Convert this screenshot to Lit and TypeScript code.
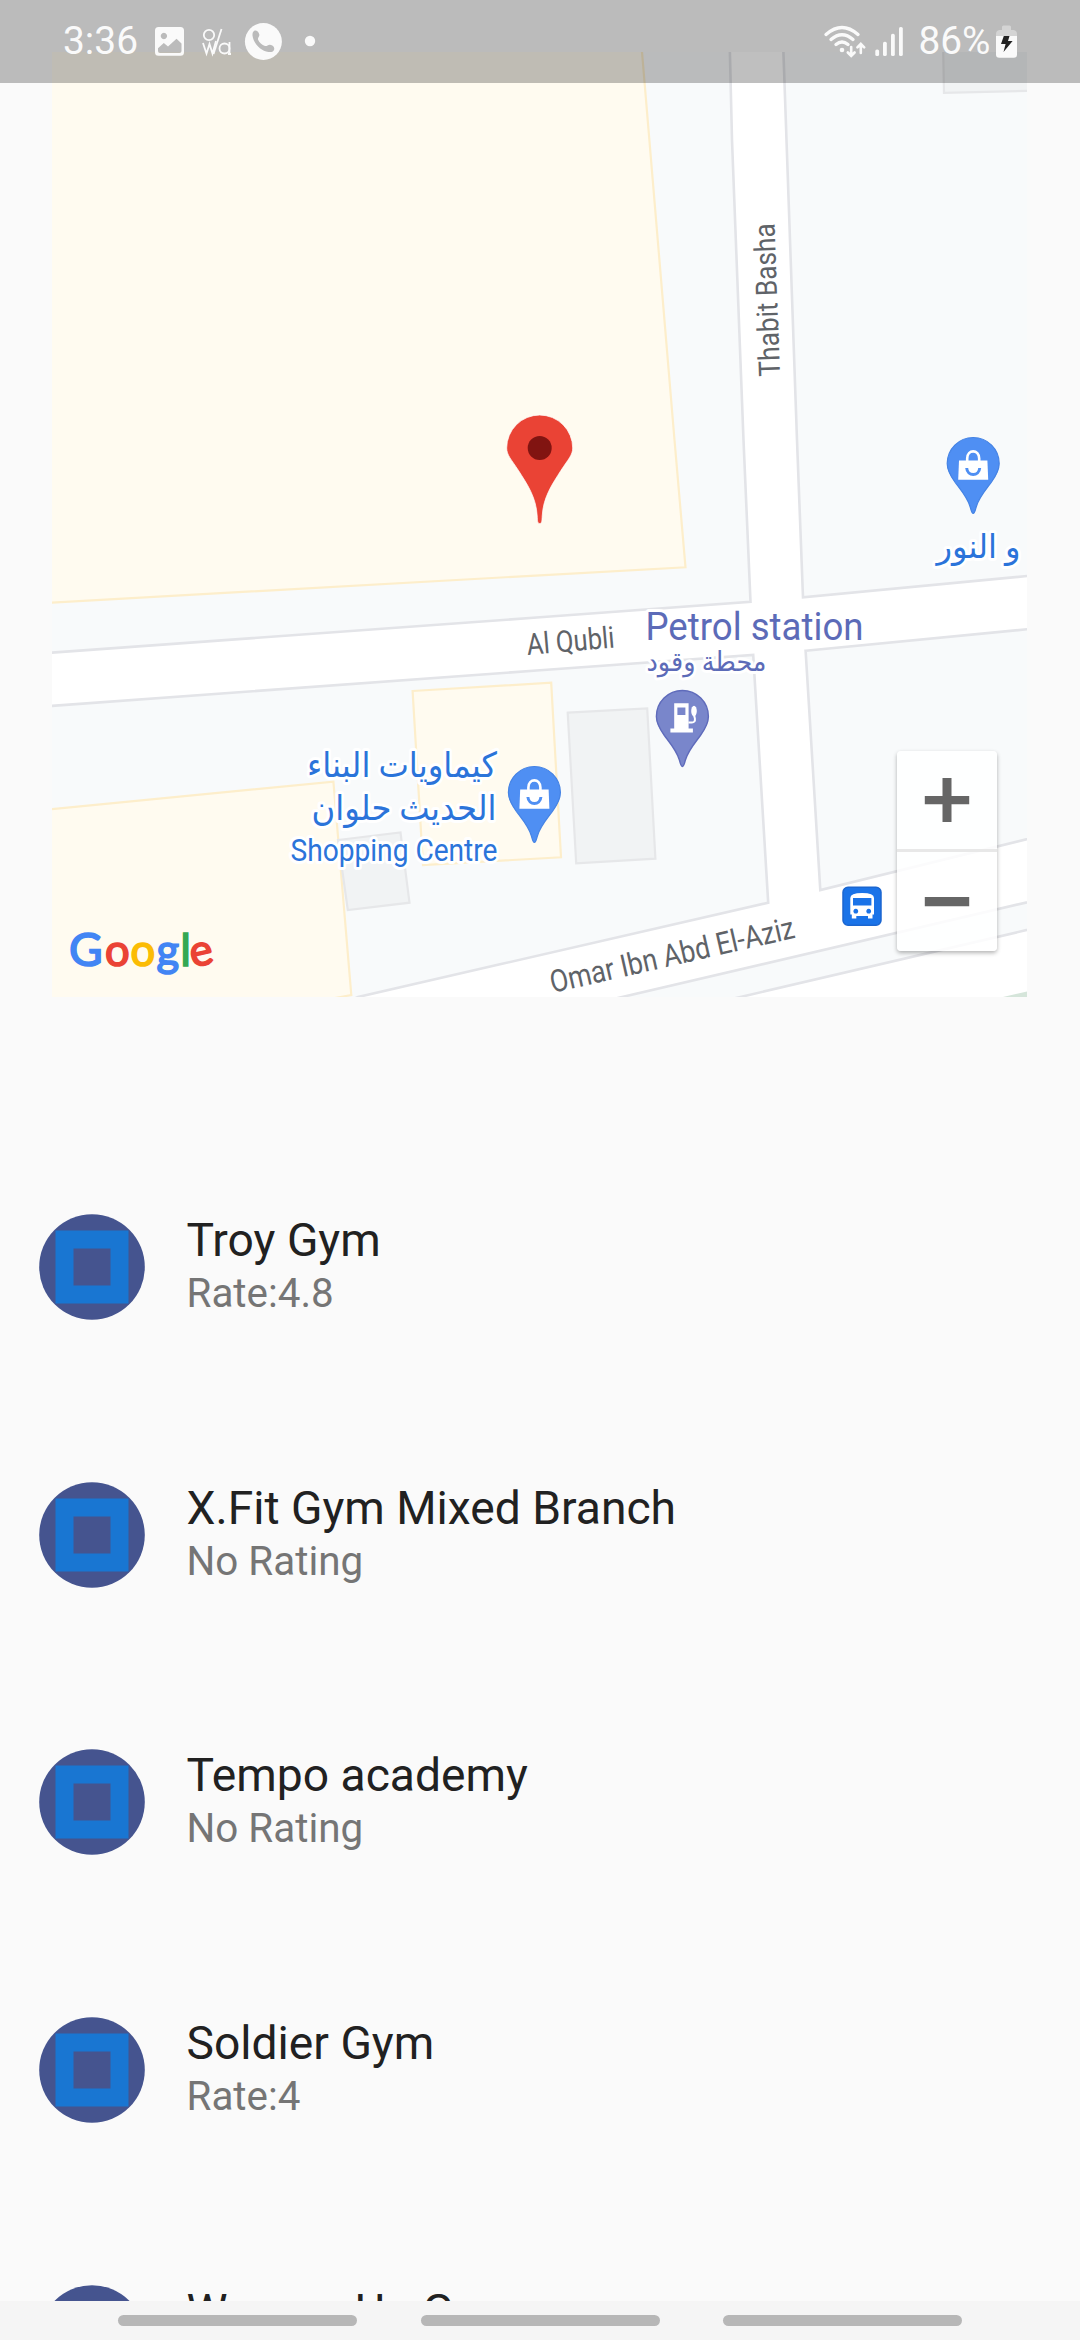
import { LitElement, html, svg, css } from "lit";
import { customElement, property } from "lit/decorators.js";

interface Gym {
  name: string;
  rating: string;
}

const GYMS: Gym[] = [
  { name: "Troy Gym", rating: "Rate:4.8" },
  { name: "X.Fit Gym Mixed Branch", rating: "No Rating" },
  { name: "Tempo academy", rating: "No Rating" },
  { name: "Soldier Gym", rating: "Rate:4" },
  { name: "Women Up Gym", rating: "No Rating" },
];

const PIN = "M0 50 C-1.6 50 -2 47 -3 43.5 C-5.500 34.500 -12 27 -18 19 C-23 12 -26 7 -26 0 A26 26 0 0 1 26 0 C26 7 23 12 18 19 C12 27 5.500 34.500 3 43.500 C2 47 1.600 50 0 50 Z";

const shopPin = (x: number, y: number) => svg`
  <g transform="translate(${x} ${y})">
    <path class="pin-shop" d=${PIN} />
    <path fill="#fff" d="M-14.200 -3 H14.200 L15 16.300 H-15 Z" />
    <path fill="none" stroke="#fff" stroke-width="2.600" d="M-6 -2 V-5 C-6 -14.500 6 -14.500 6 -5 V-2" />
    <path fill="none" stroke="#4f8ff3" stroke-width="3" d="M-6.500 4.500 C-6 13 6 13 6.500 4.500" />
  </g>`;

@customElement("status-bar")
class StatusBar extends LitElement {
  static styles = css`
    :host { display: block; height: 83px; background: rgba(0, 0, 0, 0.25); }
    .bar { display: flex; justify-content: space-between; width: 1080px; height: 83px; }
    svg { display: block; }
    text { font-family: Roboto, sans-serif; fill: #fafafa; }
  `;
  render() {
    return html`<div class="bar">
      <svg width="340" height="83" viewBox="0 0 340 83" fill="#fafafa">
        <text x="63" y="54.300" font-size="39.500" textLength="75" lengthAdjust="spacingAndGlyphs">3:36</text>
        <path fill-rule="evenodd" d="M158.500 27 H180.500 Q184 27 184 30.500 V52.300 Q184 55.800 180.500 55.800 H158.500 Q155 55.800 155 52.300 V30.500 Q155 27 158.500 27 Z M158 48.200 L163.800 43 L168 46.500 L176.500 38.800 L181.500 43.500 V51 Q181.500 53 179.500 53 H160 Q158 53 158 51 Z M163.900 32.800 a3.200 3.200 0 1 0 .01 0 Z" />
        <g fill="none" stroke="#fafafa" stroke-width="1.800">
          <circle cx="209" cy="35" r="5.200" />
          <path d="M221.500 29 L213.500 54" />
          <path d="M203 43 L206.500 53.500 L209.500 44 L212.500 53.500 L216 41" />
          <circle cx="224.500" cy="48.500" r="5" />
          <path d="M229.500 42 V54 M228 54 H231" />
        </g>
        <circle cx="263.400" cy="41.500" r="18.500" />
        <path fill="#bbb" d="M254 31 C256 29.800 258.500 31.500 259.300 34.500 C259.800 36.500 257.500 37.800 258 39.500 C259.200 42.500 262 45 265 46 C266.800 46.500 268 44.500 270 44.700 C273 45.200 275 47 274 50 C273 52 271 52.300 268.500 52 C260.500 50.500 253.500 43.500 252.500 35.500 C252.400 33.500 252.700 32 254 31 Z" />
        <circle cx="310" cy="41" r="5.200" />
      </svg>
      <svg width="270" height="83" viewBox="810 0 270 83" fill="#fafafa">
        <g fill="none" stroke="#fafafa" stroke-width="3.400" stroke-linecap="round">
          <path d="M826 34.500 Q842 20.500 858 34.500" />
          <path d="M831 39.500 Q842 30 853 39.500" />
          <path d="M836 44.500 Q842 39.500 848 44.500" />
          <path stroke-width="2.600" d="M851.200 47 V55.500 M847.800 52.500 L851.200 56 L854.600 52.500 M860.800 53 V44.500 M857.400 47.300 L860.800 43.800 L864.200 47.300" />
        </g>
        <circle cx="842" cy="50" r="2.300" />
        <rect x="875.300" y="49.500" width="3.800" height="6.500" rx="1.600" />
        <rect x="883" y="41.700" width="3.800" height="14.300" rx="1.600" />
        <rect x="891" y="33.800" width="3.800" height="22.200" rx="1.600" />
        <rect x="899" y="27" width="3.800" height="29" rx="1.600" />
        <text x="918.500" y="54.300" font-size="39.500" textLength="72" lengthAdjust="spacingAndGlyphs">86%</text>
        <path fill="#d4d4d4" d="M1002 30 V27 Q1002 25.500 1003.500 25.500 H1009.500 Q1011 25.500 1011 27 V30 H1013.500 Q1017 30.500 1017 34 V37 H996 V34 Q996 30.500 999.500 30 Z" />
        <path d="M996 36 H1017 V54.500 Q1017 57.800 1013.700 57.800 H999.300 Q996 57.800 996 54.500 Z" />
        <path fill="#222" d="M1003.800 36 H1009.500 L1008 41 H1012.600 L1003.500 52 L1005.600 44 H1001 Z" />
      </svg>
    </div>`;
  }
}

@customElement("gym-map")
class GymMap extends LitElement {
  static styles = css`
    :host { display: block; position: relative; width: 975px; height: 945px; }
    svg { display: block; }
    text { font-family: Roboto, "DejaVu Sans", sans-serif; }
    .land { fill: #f8fafb; stroke: #e3e4e8; stroke-width: 2.6; }
    .area { fill: #fffbf0; stroke: #fdeecb; stroke-width: 2.2; }
    .building { fill: #f1f3f4; stroke: #e6e7e9; stroke-width: 2.2; }
    .street { fill: #5f6368; }
    .halo { paint-order: stroke; stroke: #fff; stroke-width: 6px; stroke-linejoin: round; }
    .fuel { fill: #5c6bb8; }
    .shop { fill: #2b74da; }
    .pin-shop { fill: #4f8ff3; stroke: #4583e4; stroke-width: 1.2; }
    .pin-fuel { fill: #7986cb; stroke: #5f6bbb; stroke-width: 1.4; }
    .google { font-family: Lato, sans-serif; font-weight: 400; font-size: 43.5px; stroke-width: 1.7px; }
    .big { font-size: 46px; }
    .blue { fill: #4285f4; stroke: #4285f4; }
    .red { fill: #ea4335; stroke: #ea4335; }
    .yellow { fill: #fbbc05; stroke: #fbbc05; }
    .green { fill: #34a853; stroke: #34a853; }
    .control {
      position: absolute; right: 30.5px; bottom: 46px; width: 100px; height: 200.5px;
      display: flex; flex-direction: column; border-radius: 4px;
      background: rgba(255, 255, 255, 0.84);
      box-shadow: 0 2px 4px rgba(0, 0, 0, 0.3);
    }
    .zoom { display: flex; flex: 1; align-items: center; justify-content: center; }
    .zoom + .zoom { border-top: 3px solid #e8e8e8; }
  `;
  render() {
    return html`<svg width="975" height="945" viewBox="52 52 975 945">
      <rect x="52" y="52" width="975" height="945" fill="#fff" />
      <path class="land" d="M40 40 H729.600 L732 140 L743.500 440 L750.500 601.700 L540 617.300 L40 653.500 Z" />
      <path class="land" d="M783 40 L797 440 L803 597.300 L1040 574.800 V40 Z" />
      <path class="land" d="M40 706.800 L540 670.300 L753.200 655 L768.200 902.700 L500 964.300 L358 997 L330 1010 H40 Z" />
      <path class="land" d="M805.600 650.700 L1040 628 V836 L820.300 890 Z" />
      <path class="land" d="M570 1009.200 L1040 899.300 V926.900 L690 1008.800 Z" />
      <path fill="#d5e5da" d="M1003 997 L1027 991.500 V997 Z" />
      <path class="area" d="M40 40 H641 L642 52 L674.500 440 L685.500 567.300 L540 575.300 L40 603.300 Z" />
      <path class="area" d="M40 810.200 L333.400 781.700 L351.300 995 L330 999 H40 Z" />
      <path class="area" d="M412.600 691 L551.200 682.700 L561 857.300 L423 865 Z" />
      <path class="building" d="M338 840 L400.500 832.500 L409.500 902.700 L347.800 910 Z" />
      <path class="building" d="M567.700 712.700 L647.200 708.300 L655.400 858.700 L576.200 863.300 Z" />
      <path class="building" d="M943 40 L944 92.800 L1040 90.500 V40 Z" />

      <text class="street halo" font-size="29.500" transform="translate(780 376) rotate(-92.100)" textLength="153" lengthAdjust="spacingAndGlyphs">Thabit Basha</text>
      <text class="street halo" font-size="30" transform="translate(527.500 655) rotate(-4.900)" textLength="88" lengthAdjust="spacingAndGlyphs">Al Qubli</text>
      <text class="street halo" font-size="31" transform="translate(552.500 993) rotate(-12.800)" textLength="250" lengthAdjust="spacingAndGlyphs">Omar Ibn Abd El-Aziz</text>

      <text class="fuel halo" x="645.500" y="640" font-size="38.500" textLength="218" lengthAdjust="spacingAndGlyphs">Petrol station</text>
      <text class="fuel halo" x="646.500" y="671" font-size="27" textLength="120" lengthAdjust="spacingAndGlyphs">محطة وقود</text>
      <text class="shop halo" x="936.500" y="558" font-size="33" textLength="84" lengthAdjust="spacingAndGlyphs">و النور</text>
      <text class="shop halo" x="307" y="777" font-size="34.500" textLength="190" lengthAdjust="spacingAndGlyphs">كيماويات البناء</text>
      <text class="shop halo" x="311.500" y="820" font-size="34.500" textLength="185" lengthAdjust="spacingAndGlyphs">الحديث حلوان</text>
      <text class="shop halo" x="290.500" y="860.700" font-size="30.500" textLength="207" lengthAdjust="spacingAndGlyphs">Shopping Centre</text>

      ${shopPin(973.2, 463.5)}
      ${shopPin(534.4, 792.5)}
      <g transform="translate(682.400 716.500)">
        <path class="pin-fuel" d=${PIN} />
        <path fill="#fff" fill-rule="evenodd" d="M-8.200 -13.200 H6.200 V12 H10.500 V16 H-12 V12 H-8.200 Z M-5 -9 V-1.500 H3 V-9 Z" />
        <path fill="none" stroke="#fff" stroke-width="2" d="M6 6 H9.500 Q13 6 12.500 2 Q11.500 -1 11.500 -4" />
        <ellipse cx="11.600" cy="-5.500" rx="2.800" ry="5.200" fill="#fff" />
      </g>

      <path fill="#ea4335" stroke="#fff" stroke-opacity="0.700" stroke-width="1" d="M539.700 523.500 C537.400 523.500 537.500 521 537.200 516 C536.200 497 527 484 518.500 470.500 C511 459 506.700 455 506.700 448 A33 33 0 0 1 572.700 448 C572.700 455 568.400 459 560.900 470.500 C552.400 484 543.200 497 542.200 516 C541.900 521 542 523.500 539.700 523.500 Z" />
      <circle cx="539.700" cy="448" r="12" fill="#811411" />

      <rect x="843" y="887.200" width="38" height="38" rx="5" fill="#1a73e8" stroke="#1b66d0" stroke-width="1.500" />
      <path fill="#fff" fill-rule="evenodd" d="M850.300 898 Q850.300 893 862.200 893 Q874 893 874 898 V914.500 H872.500 V918.500 H868 V916 H856.300 V918.500 H851.800 V914.500 H850.300 Z M853 898 V905.500 H871.400 V898 Z M855.800 908.800 a2.400 2.400 0 1 0 .01 0 Z M868.700 908.800 a2.400 2.400 0 1 0 .01 0 Z" />

      <text class="google" y="966 966 966 966 966 967.500" x="69 105 130.500 156.500 180.500 192.500"><tspan class="blue big">G</tspan><tspan class="red">o</tspan><tspan class="yellow">o</tspan><tspan class="blue">g</tspan><tspan class="green">l</tspan><tspan class="red" rotate="-12">e</tspan></text>
    </svg>
    <div class="control">
      <div class="zoom">
        <svg width="46" height="46" viewBox="0 0 46 46"><path fill="#666" d="M18.500 1 H27.500 V19 H45.200 V27.300 H27.500 V45 H18.500 V27.300 H0.800 V19 H18.500 Z" /></svg>
      </div>
      <div class="zoom">
        <svg width="46" height="46" viewBox="0 0 46 46"><path fill="#666" d="M0.800 18 H45.200 V27.300 H0.800 Z" /></svg>
      </div>
    </div>`;
  }
}

@customElement("gym-tile")
class GymTile extends LitElement {
  @property() name = "";
  @property() rating = "";
  static styles = css`
    :host { display: flex; align-items: center; gap: 41.5px; height: 267.75px; padding-left: 39px; flex: none; }
    .avatar { display: block; flex: none; }
    .copy { display: flex; flex-direction: column; font-family: Roboto, sans-serif; white-space: nowrap; }
    .name { font-size: 46.2px; line-height: 54px; color: #212121; }
    .rating { font-size: 40.4px; line-height: 54px; color: #757575; }
  `;
  render() {
    return html`
      <svg class="avatar" width="106" height="106" viewBox="0 0 106 106">
        <circle cx="53" cy="53" r="52.800" fill="#45548f" />
        <rect x="16.500" y="16.500" width="73" height="73" fill="#1976d2" />
        <rect x="34.500" y="34.500" width="37" height="37" fill="#45548f" />
      </svg>
      <div class="copy">
        <span class="name">${this.name}</span>
        <span class="rating">${this.rating}</span>
      </div>
    `;
  }
}

@customElement("app-root")
class AppRoot extends LitElement {
  static styles = css`
    :host { display: block; }
    .screen { position: relative; display: flex; flex-direction: column; width: 1080px; height: 2340px; overflow: hidden; background: #fafafa; }
    .status { position: absolute; inset: 0 0 auto 0; }
    .content { display: flex; flex-direction: column; flex: 1; min-height: 0; overflow: hidden; padding-top: 52px; }
    .map { flex: none; margin: 0 0 136px 52px; }
    .list { display: flex; flex-direction: column; }
    .nav { display: flex; align-items: center; gap: 63.5px; height: 39px; flex: none; padding-left: 118px; background: #f5f5f5; }
    .pill { width: 239px; height: 11px; border-radius: 5.5px; background: #b7b7b7; }
  `;
  render() {
    return html`<div class="screen">
      <div class="content">
        <gym-map class="map"></gym-map>
        <div class="list">
          ${GYMS.map((g) => html`<gym-tile .name=${g.name} .rating=${g.rating}></gym-tile>`)}
        </div>
      </div>
      <div class="nav"><span class="pill"></span><span class="pill"></span><span class="pill"></span></div>
      <status-bar class="status"></status-bar>
    </div>`;
  }
}
